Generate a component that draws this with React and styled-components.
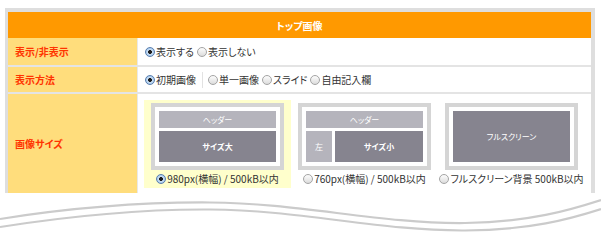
import React from 'react'
import styled, { createGlobalStyle } from 'styled-components'

const GlobalStyle = createGlobalStyle`
  body {
    margin: 0;
    background: #fff;
    font-family: "Noto Sans CJK JP", "Noto Sans", sans-serif;
  }
`

function Radio({ checked }) {
    return <RadioDot checked={checked} />
}

function Option({ checked, children }) {
    return (
        <OptionLabel>
            <Radio checked={checked} />
            <span>{children}</span>
        </OptionLabel>
    )
}

function SizeCard({ selected, label, children }) {
    return (
        <Card selected={selected}>
            <Preview>{children}</Preview>
            <Option checked={selected}>{label}</Option>
        </Card>
    )
}

export default function App() {
    return (
        <Page>
            <GlobalStyle />
            <Panel>
                <Title>トップ画像</Title>

                <Row h={29}>
                    <Label>表示/非表示</Label>
                    <Value>
                        <Option checked>表示する</Option>
                        <Option>表示しない</Option>
                    </Value>
                </Row>

                <Row h={27}>
                    <Label>表示方法</Label>
                    <Value>
                        <Option checked>初期画像</Option>
                        <Separator />
                        <Option>単一画像</Option>
                        <Option>スライド</Option>
                        <Option>自由記入欄</Option>
                    </Value>
                </Row>

                <Row h={99} last>
                    <Label>画像サイズ</Label>
                    <Cards>
                        <SizeCard selected label="980px(横幅) / 500kB以内">
                            <Block>ヘッダー</Block>
                            <Body>
                                <Block dark grow bold>サイズ大</Block>
                            </Body>
                        </SizeCard>
                        <SizeCard label="760px(横幅) / 500kB以内">
                            <Block>ヘッダー</Block>
                            <Body>
                                <Block w={26} tall>左</Block>
                                <Block dark grow bold>サイズ小</Block>
                            </Body>
                        </SizeCard>
                        <SizeCard label="フルスクリーン背景 500kB以内">
                            <Body>
                                <Block dark grow>フルスクリーン</Block>
                            </Body>
                        </SizeCard>
                    </Cards>
                </Row>
            </Panel>

            {/* torn edge: the page goes on below */}
            <Wave viewBox="0 0 601 47" width="601" height="47">
                <path d="M0,26 C70,15 140,9 210,9.5 C300,10 380,31 465,30 C530,29 570,17 601,7" />
                <path d="M0,34 C70,23 140,16 210,16.5 C300,17 380,38 465,37.5 C530,37 570,26 601,16" />
            </Wave>
        </Page>
    )
}

const Page = styled.div`
    width: 601px;
    height: 240px;
    overflow: hidden;
    padding-top: 8px;
    box-sizing: border-box;
`

const Panel = styled.div`
    width: 590px;
    margin-left: 5px;
    box-sizing: border-box;
    border: 4px solid #dedede;
    border-left-width: 3px;
    border-bottom: 0;
    font-size: 10px;
    font-feature-settings: "palt";
    color: #333;
`

const Title = styled.div`
    height: 26px;
    background: #ff9900;
    color: #fff;
    font-weight: bold;
    display: flex;
    align-items: center;
    justify-content: center;
`

const Row = styled.div`
    display: grid;
    grid-template-columns: 130px 1fr;
    height: ${props => props.h}px;
    box-sizing: border-box;
    border-bottom: ${props => props.last ? 'none' : '2px solid #e4e4e4'};
`

const Label = styled.div`
    background: #ffdd7c;
    color: #ff3300;
    font-weight: bold;
    display: flex;
    align-items: center;
    padding-left: 7px;
    border-right: 1px solid #e8e8e8;
`

const Value = styled.div`
    display: flex;
    align-items: center;
    padding-left: 7px;
    gap: 3px;
`

const OptionLabel = styled.label`
    display: flex;
    align-items: center;
    gap: 1px;
    white-space: nowrap;
`

const RadioDot = styled.span`
    width: 10px;
    height: 10px;
    box-sizing: border-box;
    border-radius: 50%;
    border: 1px solid ${props => props.checked ? '#5b7fae' : '#a4a4a4'};
    background: ${props => props.checked
        ? 'radial-gradient(circle at 50% 50%, #1c1c1c 0 1.8px, #cfe2f6 2.2px, #7fb0e2 100%)'
        : 'linear-gradient(#fdfdfd, #dcdcdc)'};
    flex: none;
`

const Separator = styled.span`
    width: 1px;
    height: 16px;
    background: #e2e2e2;
    margin: 0 2px 0 3px;
`

const Cards = styled.div`
    display: flex;
    align-items: flex-start;
    padding: 6px 0 0 6px;
`

const Card = styled.div`
    width: 147px;
    height: 88px;
    box-sizing: border-box;
    padding-top: 3px;
    display: flex;
    flex-direction: column;
    align-items: center;
    gap: 1px;
    background: ${props => props.selected ? '#ffffcc' : 'transparent'};
`

const Preview = styled.div`
    width: 133px;
    height: 67px;
    box-sizing: border-box;
    border: 4px solid #d5d5d5;
    padding: 4px;
    background: #fff;
    display: flex;
    flex-direction: column;
    gap: 3px;
`

const Body = styled.div`
    flex: 1;
    display: flex;
    gap: 3px;
`

const Block = styled.div`
    height: ${props => (props.grow || props.tall) ? 'auto' : '17px'};
    flex: ${props => props.grow ? 1 : 'none'};
    width: ${props => props.w ? `${props.w}px` : 'auto'};
    background: ${props => props.dark ? '#86848f' : '#b5b4bc'};
    color: #fff;
    font-size: 8px;
    font-weight: ${props => props.bold ? 'bold' : 'normal'};
    display: flex;
    align-items: center;
    justify-content: center;
`

const Wave = styled.svg`
    display: block;
    fill: none;
    stroke: #cbcbcb;
    stroke-width: 2.2;
`
